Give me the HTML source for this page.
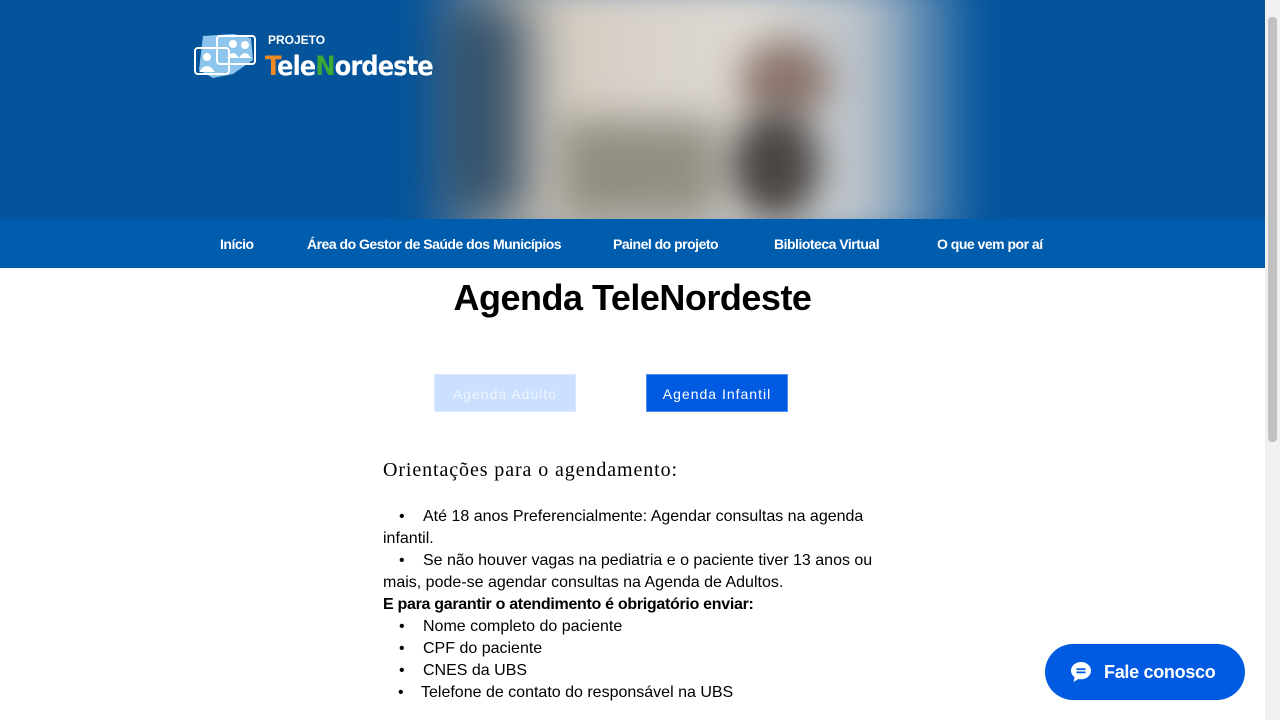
<!DOCTYPE html>
<html><head><meta charset="utf-8">
<style>
html,body{margin:0;padding:0;}
body{width:1280px;height:720px;overflow:hidden;position:relative;background:#fff;font-family:"Liberation Sans",sans-serif;}
#hdr{position:absolute;left:0;top:0;width:1265px;height:219px;background:#04549c;overflow:hidden;}
#photo{position:absolute;left:420px;top:-20px;width:560px;height:260px;filter:blur(18px);
background:linear-gradient(90deg,rgba(4,84,156,0) 0%,#cfc6b8 15%,#d9d3cc 40%,#ddd8d2 60%,#b7c0c8 80%,rgba(4,84,156,0) 100%);}
#dark1{position:absolute;left:440px;top:0;width:90px;height:219px;background:#0c2e4e;filter:blur(25px);opacity:.7}
#dark2{position:absolute;left:730px;top:110px;width:90px;height:110px;background:#3a3634;filter:blur(18px);opacity:.9;border-radius:50%}
#dark3{position:absolute;left:740px;top:40px;width:90px;height:80px;background:#7a5f55;filter:blur(18px);opacity:.8;border-radius:50%}
#dark4{position:absolute;left:560px;top:120px;width:160px;height:100px;background:#7f7d70;filter:blur(20px);opacity:.8}
#nav{position:absolute;left:0;top:219px;width:1265px;height:49px;background:#005cac;}
#nav span{position:absolute;top:17px;color:#fff;font-weight:bold;font-size:14px;letter-spacing:-0.5px;}
#logo{position:absolute;left:193px;top:30px;}
#proj{position:absolute;left:268px;top:33px;color:#fff;font-size:12px;font-weight:bold;}
#tn{position:absolute;left:265px;top:51px;color:#fff;font-size:27px;font-weight:bold;font-family:"DejaVu Sans Condensed","Liberation Sans",sans-serif;letter-spacing:-1px}
h1{position:absolute;left:0;width:1265px;top:277px;margin:0;text-align:center;font-size:36px;font-weight:bold;letter-spacing:-0.5px;color:#000;}
.btn{position:absolute;top:374px;height:38px;line-height:38px;width:142px;text-align:center;font-size:14px;letter-spacing:1px;box-sizing:border-box;}
#b1{left:434px;background:#cbe0fe;color:#eef4ff;border:1px solid #dceaff}
#b2{left:646px;background:#005be2;color:#fff;border:1px solid #4e8ef0}
#ori{position:absolute;left:383px;top:459px;font-family:"Liberation Serif",serif;font-size:20px;letter-spacing:0.9px;color:#000}
#txt{position:absolute;left:383px;top:506px;width:520px;font-size:16px;line-height:22px;color:#000;}
.li{padding-left:16px;}
.li:before{content:"•";display:inline-block;width:24px;}
#fale{position:absolute;left:1045px;top:644px;width:200px;height:56px;border-radius:28px;background:#005be2;color:#fff;font-weight:bold;font-size:18px;}
#fale span{position:absolute;left:59px;top:18px;letter-spacing:-0.3px}
#sb{position:absolute;left:1265px;top:0;width:15px;height:720px;background:#f1f1f1}
#th{position:absolute;left:1268px;top:17px;width:9px;height:425px;background:#c1c1c1;border-radius:4px}
</style></head><body>
<div id="hdr">
<div id="photo"></div><div id="dark1"></div><div id="dark4"></div><div id="dark3"></div><div id="dark2"></div>
<svg id="logo" width="66" height="52" viewBox="0 0 66 52">
<path d="M10 6 L40 4 L58 8 L60 30 L40 44 L20 48 L6 40 Z" fill="#8ec5ec"/>
<rect x="24" y="6" width="38" height="28" rx="3" fill="none" stroke="#fff" stroke-width="2"/>
<rect x="2" y="18" width="34" height="26" rx="3" fill="none" stroke="#fff" stroke-width="2"/>
<circle cx="40" cy="14" r="4" fill="#fff"/><circle cx="52" cy="15" r="4" fill="#fff"/>
<path d="M34 28 q6-10 12 0 z M46 28 q6-10 12 0z" fill="#fff"/>
<circle cx="14" cy="27" r="4" fill="#fff"/><path d="M6 42 q8-12 16 0z" fill="#fff"/>
</svg>
<div id="proj">PROJETO</div>
<div id="tn"><span style="color:#f08a24">T</span>ele<span style="color:#3aa935">N</span>ordeste</div>
</div>
<div id="nav">
<span style="left:220px">Início</span>
<span style="left:307px">Área do Gestor de Saúde dos Municípios</span>
<span style="left:613px">Painel do projeto</span>
<span style="left:774px">Biblioteca Virtual</span>
<span style="left:937px">O que vem por aí</span>
</div>
<h1>Agenda TeleNordeste</h1>
<div class="btn" id="b1">Agenda Adulto</div>
<div class="btn" id="b2">Agenda Infantil</div>
<div id="ori">Orientações para o agendamento:</div>
<div id="txt">
<div class="li">Até 18 anos Preferencialmente: Agendar consultas na agenda</div>
<div>infantil.</div>
<div class="li">Se não houver vagas na pediatria e o paciente tiver 13 anos ou</div>
<div>mais, pode-se agendar consultas na Agenda de Adultos.</div>
<div><b style="letter-spacing:-0.3px">E para garantir o atendimento é obrigatório enviar:</b></div>
<div class="li">Nome completo do paciente</div>
<div class="li">CPF do paciente</div>
<div class="li">CNES da UBS</div>
<div class="li" style="padding-left:15px"><span style="margin-left:-1px">Telefone de contato do responsável na UBS</span></div>
</div>
<div id="fale">
<svg style="position:absolute;left:24px;top:16px" width="24" height="24" viewBox="0 0 24 24">
<path d="M12 2C6.5 2 2 5.9 2 10.6c0 2.6 1.4 4.9 3.5 6.5L4.5 22l5-3c.8.2 1.6.3 2.5.3 5.5 0 10-3.9 10-8.7S17.5 2 12 2z" fill="#fff"/>
<rect x="7.5" y="8.3" width="9" height="1.8" fill="#005be2"/><rect x="7.5" y="11.5" width="9" height="1.8" fill="#005be2"/>
</svg>
<span>Fale conosco</span></div>
<div id="sb"></div><div id="th"></div>
</body></html>
